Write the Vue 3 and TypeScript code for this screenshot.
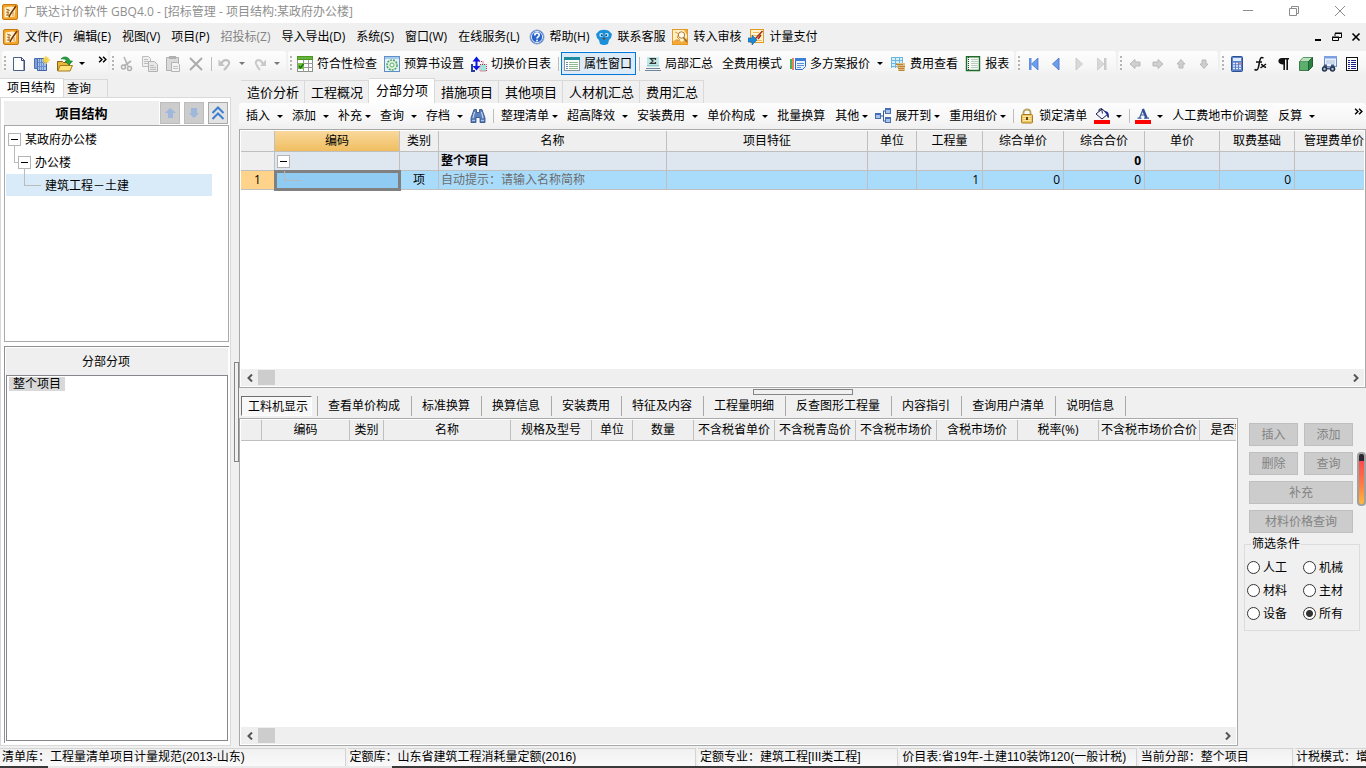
<script setup lang="ts">
import { ref } from 'vue'

type Arrow = 'none' | 'near' | 'far'
interface Tool {
  id: string
  icon?: string
  text?: string
  arrow?: Arrow
  sep?: boolean
  boxed?: boolean
  off?: boolean
}
interface MenuItem { text: string; icon?: string; off?: boolean }
interface Column { label: string; width: number }

const page = 'fill="#fff" stroke="#4a5f86"'
const grey = '#b4b4b4'

const icons: Record<string, string> = {
  app: '<rect x=".5" y=".5" width="15" height="15" rx="1.5" fill="#f2a52a" stroke="#c47a10"/><path d="M2.500 3.500l7-1 4 1-1 9-10 1z" fill="#fff3cf"/><path d="M4 5l4 1.500M4 8l3 1M4 11h3M6 5v7" stroke="#b0712a"/><path d="M14 2L8.500 10l-1.500 3" stroke="#7a3208" stroke-width="1.500" fill="none"/><path d="M11 8v4" stroke="#c88a3a"/>',
  help: '<circle cx="8" cy="8" r="7" fill="#2a62c8" stroke="#8fa6cf"/><circle cx="8" cy="8" r="5.6" fill="none" stroke="#dce9ff"/><path d="M5.8 6.4c0-3 4.6-2.800 4.400-.2-.1 1.500-2.200 1.600-2.200 3.300" fill="none" stroke="#fff" stroke-width="1.700"/><rect x="7.200" y="10.700" width="1.700" height="1.700" fill="#fff"/>',
  service: '<path d="M2 3C4 0 12 0 14 3l2 2-1 4-2 2-1 4-3 1H7l-3-1-1-4-2-2-1-4z" fill="#1c8fdb"/><circle cx="5.300" cy="6" r="2" fill="#bdeaff"/><circle cx="10.700" cy="6" r="2" fill="#bdeaff"/><circle cx="5.800" cy="6.300" r="1" fill="#0b3d78"/><circle cx="10.200" cy="6.300" r="1" fill="#0b3d78"/><path d="M6.500 9.500L8 8.500l1.500 1L8 11z" fill="#7a3a1a"/>',
  audit: '<rect x=".5" y=".5" width="15" height="15" fill="#fdf0c4" stroke="#e39a25"/><path d="M1 12l4-2 5 3 5-4v6H1zM12 1h3v5z" fill="#f4a93a"/><path d="M3 3l4 2-2 3 3 3-4 1" fill="none" stroke="#d99a45"/><circle cx="9.500" cy="6" r="3.200" fill="#fffaf0" stroke="#b07a2d"/><path d="M11.500 8.500L15 13" stroke="#a0703a" stroke-width="1.800"/>',
  pay: '<rect x="2.500" y=".5" width="13" height="13" fill="#fff4d0" stroke="#e39a25"/><path d="M5 3.500h6M5 6.500h5M8 11.500h6" stroke="#efb95d"/><path d="M14.500 2L9 8l-2 2M13 6l-3 4" stroke="#a02c16" stroke-width="1.500" fill="none"/><path d="M0 9h4V6l5 5-5 5v-3H0z" fill="#1c8ad8" stroke="#125c9c" stroke-width=".6"/>',
  fresh: `<path d="M2.500 1.500h8l3 3v10h-11z" ${page}/><path d="M10.500 1.500v3h3M13 14V5" fill="none" stroke="#2e4674"/>`,
  batch: '<path d="M3.500 2.500h9v12h-9z" fill="#a9c3ea" stroke="#3c62a8"/><path d="M5.500 3v11M7.500 3v11M9.500 3v11M4 6.500h8M4 10.500h8" stroke="#6b8fcd"/><path d="M.5 2.500h3v10h-3z" fill="#7d9fd6" stroke="#4a70b4"/><path d="M12 0v8M8.500 4H16M9.500 1.500l5 5M14.500 1.500l-5 5" stroke="#f2d24a" stroke-width="1.400"/>',
  open: '<path d="M.5 5.500h5l1 1h6v8H.5z" fill="#e9b53a" stroke="#8b6310"/><path d="M3 9.500h12.500L13 15H.8z" fill="#ffe27a" stroke="#a37a1c"/><path d="M4 3c2-3 8-3 9 2h2.500L12 9 8 5h2C9 3 6 2.500 4 3z" fill="#1ca33a" stroke="#0d6b24" stroke-width=".6"/>',
  cut: `<path d="M5 1l4 9M12 5L5 10" stroke="${grey}" stroke-width="1.600"/><circle cx="4.500" cy="11" r="2" fill="none" stroke="#b0b0b0" stroke-width="1.500"/><circle cx="10.500" cy="12.500" r="2" fill="none" stroke="#b0b0b0" stroke-width="1.500"/>`,
  copy: '<path d="M.5 .5h6l2 2v8h-8z" fill="#f0f0f0" stroke="#bdbdbd"/><path d="M6.500 5.500h6l3 3v7h-9z" fill="#e8e8e8" stroke="#b2b2b2"/><path d="M8 9.500h4M8 11.500h6M8 13.500h6M2 3.500h4M2 5.500h4M2 7.500h4" stroke="#bdbdbd"/>',
  paste: '<path d="M1.500 1.500h12v13h-12z" fill="#dadada" stroke="#b0b0b0"/><path d="M4 0h7v3H4z" fill="#b0b0b0"/><path d="M6.500 6.500h6l2 2v7h-8z" fill="#f3f3f3" stroke="#b4b4b4"/><path d="M8 10.500h5M8 12.500h5" stroke="#c2c2c2"/>',
  del: '<path d="M2 2l12 12M14 2L2 14" stroke="#ababab" stroke-width="2"/>',
  undo: '<path d="M4 8c3-6 9-4 8-.5-1 3-3 4-5 6.500" fill="none" stroke="#c0c0c0" stroke-width="2.200"/><path d="M1.500 3.500V10H8z" fill="#c4c4c4"/>',
  redo: '<path d="M11 8C8 2 3 4 4 7.500c1 3 2 4 4 6.500" fill="none" stroke="#cacaca" stroke-width="2.200"/><path d="M14 3.500V10H8z" fill="#cacaca"/>',
  check: '<rect x=".5" y=".5" width="15" height="15" fill="#fff" stroke="#8a938a"/><rect x="0" y="0" width="16" height="4" fill="#4a9a1f"/><path d="M1 2h14" stroke="#8acb62"/><path d="M0 7.500h16M0 11.500h16M6.500 4v12M11.500 4v12" stroke="#9a9a9a"/><rect x="1" y="7" width="6" height="6" fill="#72c043"/><path d="M2 10l1.500 2L6.500 8" stroke="#176a0d" stroke-width="1.300" fill="none"/>',
  budget: '<rect x=".5" y=".5" width="15" height="15" fill="#e5f0fb" stroke="#5f8fc6"/><rect x="1" y="1" width="14" height="2" fill="#a7caec"/><circle cx="8" cy="9" r="5" fill="#dff2df" stroke="#4fa562" stroke-dasharray="2 1" stroke-width="1.600"/><circle cx="8" cy="9" r="2" fill="#fff" stroke="#58ad64"/>',
  swap: '<path d="M5.500 4v8" stroke="#0a18e0" stroke-width="2"/><path d="M1.500 5.500l4-5 4 5zM1.500 10l4 4.500 4-4.500z" fill="#0a18e0"/><path d="M10 8h5v7h-5z" fill="#98e9e0"/><path d="M8 5.500h4V8M9 8.500h6.500V15H9z" fill="none" stroke="#d02444" stroke-dasharray="1 1"/><path d="M0 8h2v6h2v2H0z" fill="#2b3aa0"/>',
  prop: '<rect x=".5" y="1.500" width="15" height="13" fill="#fff" stroke="#89949f"/><rect x="0" y="1" width="16" height="3" fill="#1c8c9e"/><path d="M2 6.500h2M2 8.500h2M2 10.500h2M2 12.500h2" stroke="#6c87c0"/><path d="M5 6.500h9M5 8.500h9M5 10.500h9M5 12.500h9" stroke="#8fb98a"/>',
  local: '<path d="M2 1h12v10H2z" fill="#bfe7e4"/><path d="M10.500 4V2.700h-5L8 5 5.500 7.300h5V6" fill="none" stroke="#333" stroke-width="1.200"/><path d="M2 9.500h12" stroke="#8fcac7"/><path d="M1 12.500h14M0 14.500h16" stroke="#70859a"/>',
  plans: '<path d="M1 3v10" stroke="#1aa232" stroke-width="1.600"/><path d="M3 2v12" stroke="#e65a2d" stroke-width="1.500"/><path d="M5.500 2.500h10v8l-3 3h-7z" fill="#e9f4ff" stroke="#2b6bc0"/><path d="M5 2h11v3H5z" fill="#3c7fd4"/><path d="M7 7.500h7M7 9.500h7M7 11.500h4" stroke="#5a8fd2"/>',
  fee: '<rect x="1" y="1" width="12" height="11" fill="#d6effa"/><path d="M1 1.500h12M1 4.500h12M1 7.500h12M1 10.500h12M1.500 1v11M5.500 1v11M9.500 1v11M12.500 1v6" stroke="#6fb6dc"/><path d="M7 7h8v8H8v-3H7z" fill="#e2be80"/><path d="M6 8.500h7M8 10.500h7M8 12.500h6M9 14.500h5" stroke="#b8823a"/>',
  report: '<path d="M1.500.700h13v13.800h-13z" fill="#f4faf4" stroke="#1e6b2a" stroke-width="1.400"/><path d="M3.500 1v13" stroke="#333" stroke-dasharray="1 1"/><path d="M6 3.500h7M6 5.500h7M6 7.500h7M6 9.500h7M6 11.500h7" stroke="#bccbbf"/>',
  first: '<path d="M4 2h2.500v12H4z" fill="#5f93e6"/><path d="M13 2v12L6.500 8z" fill="#6d9df0" stroke="#3a6cc0" stroke-width=".7"/>',
  prev: '<path d="M11 2v12L4.500 8z" fill="#6d9df0" stroke="#3a6cc0" stroke-width=".8"/>',
  next: '<path d="M5 2v12l6.500-6z" fill="#d9d9d9" stroke="#c4c4c4" stroke-width=".8"/>',
  last: '<path d="M3.500 2v12l6.500-6z" fill="#d9d9d9" stroke="#c4c4c4" stroke-width=".7"/><path d="M10 2h2.500v12H10z" fill="#cacaca"/>',
  left: '<path d="M3 8l5-4.500V6h5v4H8v2.500z" fill="#d0d0d0" stroke="#b8b8b8"/>',
  right: '<path d="M13 8L8 3.500V6H3v4h5v2.500z" fill="#d0d0d0" stroke="#b8b8b8"/>',
  up: '<path d="M8 3.500L4 8h2v4h4V8h2z" fill="#cecece" stroke="#b8b8b8"/>',
  down: '<path d="M8 12.500L4 8h2V4h4v4h2z" fill="#cecece" stroke="#b8b8b8"/>',
  calc: '<rect x="2.500" y=".5" width="11" height="15" rx="1" fill="#5b82c9" stroke="#2f4f94"/><rect x="4" y="2" width="8" height="3" fill="#dcebff"/><path d="M4 7.500h8M4 10h8M4 12.500h8" stroke="#e8f0ff" stroke-width="1.500" stroke-dasharray="2 1"/><path d="M10 7.500h2" stroke="#f08060" stroke-width="1.500"/>',
  fx: '<path d="M11.500 2C8.500 .5 8 3 7.500 6L6.500 11c-.5 3-2 3.500-4 2.500M4 6h6M9 8.500c2-.5 2 3.500 5 2.500M14 8l-5.500 4" fill="none" stroke="#111" stroke-width="1.500"/>',
  para: '<path d="M7 2h7v1.400h-1V14h-1.600V3.400H10V14H8.400V8.500C2 8.500 2 2 7 2z" fill="#111"/>',
  cube: '<path d="M1.500 5.500h9v9h-9z" fill="#5cae6c" stroke="#3c7a4a"/><path d="M1.500 5.500L5 1.500h9.500l-4 4z" fill="#b9e3bc" stroke="#5d9667"/><path d="M10.500 5.500l4-4v9l-4 4z" fill="#2b8043" stroke="#1f5f31"/>',
  find: '<rect x="3.500" y=".5" width="12" height="10" fill="#eaf2ff" stroke="#6b8fce"/><path d="M3 0h13v2.500H3z" fill="#7ca0e0"/><path d="M5 5h9M5 7h9" stroke="#a9bede"/><path d="M3 8.500h3v3h4v-3h3l1.500 5H1.500z" fill="#46597a"/><circle cx="3.500" cy="13" r="2.700" fill="#26354c"/><circle cx="11.500" cy="13" r="2.700" fill="#26354c"/><circle cx="3.500" cy="13" r="1.200" fill="#b0c4de"/><circle cx="11.500" cy="13" r="1.200" fill="#b0c4de"/>',
  list: '<rect x="2.500" y="1.500" width="11" height="13" fill="#fff" stroke="#111"/><path d="M4 4.500h2M4 6.500h2M4 8.500h2M4 10.500h2M4 12.500h2M7 4.500h5M7 6.500h5M7 8.500h5M7 10.500h5M7 12.500h5" stroke="#1a1a8c"/>',
  bino: '<path d="M4 1.500h2.500v3h3v-3H12l3 8.500v4.500h-5V9.500H6v5H1V10z" fill="#5b80bb" stroke="#2b4a80" stroke-width=".8"/><path d="M4.500 4L3 10M11.500 4l1.500 6" stroke="#d5e3f8"/><path d="M2 12.500h3M11 12.500h3" stroke="#a9c2e8"/>',
  tree: '<path d="M6 8h2.500M8.500 3v10M8 3h3M8 13h3" stroke="#3b5e9b" fill="none"/><rect x=".5" y="5.500" width="5" height="5" fill="#a8c3ee" stroke="#4a6dab"/><rect x="10.500" y=".5" width="5" height="5" fill="#a8c3ee" stroke="#4a6dab"/><rect x="10.500" y="9.500" width="5" height="5" fill="#a8c3ee" stroke="#4a6dab"/><path d="M1 6.500h4M11 1.500h4M11 10.500h4" stroke="#3f6fc4"/>',
  lock: '<path d="M4.500 7V4.500c0-4 7-4 7 0V7" fill="none" stroke="#b9a565" stroke-width="1.800"/><rect x="2.500" y="6.500" width="11" height="8.500" rx="1" fill="#efc560" stroke="#a87c20"/><path d="M4 8.500h8M4 10.500h8M4 12.500h8" stroke="#fbe7a8"/><path d="M8 9v3" stroke="#5e4510" stroke-width="2"/>',
  bucket: '<path d="M2 6l6-5 6 5-6 5z" fill="#f4f6ff" stroke="#1b1b50"/><path d="M5 3.500V1.500L7.500 .5l1 5" fill="none" stroke="#1b1b50"/><path d="M10 3c4 0 5 2 5 6-1 2-2 0-2-2z" fill="#1b2c8c"/><rect x="0" y="12" width="16" height="4" fill="#f00"/>',
  color: '<path d="M2.500 10.200h4M9 10.200h5M4.500 10L8 1.500" stroke="#3e5f9f" stroke-width="1.300" fill="none"/><path d="M7.800 1l3.700 9" stroke="#2f4f96" stroke-width="2.500"/><path d="M6 7h4" stroke="#3e5f9f"/><rect x="0" y="12" width="16" height="4" fill="#f00"/>',
  blueUp: '<path d="M8 3L3 8h3v5h5V8h3z" fill="#9fb6dd"/>',
  blueDown: '<path d="M8 13l5-5h-2V3H5v5H3z" fill="#9fb6dd"/>',
  chevrons: '<path d="M2.500 8L8 2.500 13.500 8M2.500 14L8 8.500l5.500 5.500" fill="none" stroke="#3a7fd0" stroke-width="2"/>',
}

const menus: MenuItem[] = [
  { text: '文件(F)' }, { text: '编辑(E)' }, { text: '视图(V)' }, { text: '项目(P)' },
  { text: '招投标(Z)', off: true }, { text: '导入导出(D)' }, { text: '系统(S)' },
  { text: '窗口(W)' }, { text: '在线服务(L)' }, { text: '帮助(H)', icon: 'help' },
  { text: '联系客服', icon: 'service' }, { text: '转入审核', icon: 'audit' }, { text: '计量支付', icon: 'pay' },
]

const bars: { id: string; tools: Tool[]; more?: boolean }[] = [
  { id: 'file', more: true, tools: [{ id: 'fresh', icon: 'fresh' }, { id: 'batch', icon: 'batch' }, { id: 'open', icon: 'open', arrow: 'near' }] },
  { id: 'edit', tools: [
    { id: 'cut', icon: 'cut' }, { id: 'copy', icon: 'copy' }, { id: 'paste', icon: 'paste' }, { id: 'del', icon: 'del' },
    { id: 's1', sep: true }, { id: 'undo', icon: 'undo', arrow: 'near', off: true }, { id: 'redo', icon: 'redo', arrow: 'near', off: true }] },
  { id: 'common', tools: [
    { id: 'check', icon: 'check', text: '符合性检查' }, { id: 'budget', icon: 'budget', text: '预算书设置' },
    { id: 'swap', icon: 'swap', text: '切换价目表' }, { id: 's2', sep: true },
    { id: 'prop', icon: 'prop', text: '属性窗口', boxed: true }, { id: 's3', sep: true },
    { id: 'local', icon: 'local', text: '局部汇总' }, { id: 'mode', text: '全费用模式' },
    { id: 'plans', icon: 'plans', text: '多方案报价', arrow: 'far' },
    { id: 'fee', icon: 'fee', text: '费用查看' }, { id: 'report', icon: 'report', text: '报表' }] },
  { id: 'nav', tools: ['first', 'prev', 'next', 'last'].map((i) => ({ id: i, icon: i })) },
  { id: 'move', tools: ['left', 'right', 'up', 'down'].map((i) => ({ id: i, icon: i })) },
  { id: 'misc', tools: ['calc', 'fx', 'para', 'cube', 'find', 'list'].map((i) => ({ id: i, icon: i })) },
]

const actions: Tool[] = [
  { id: 'ins', text: '插入', arrow: 'far' }, { id: 'add', text: '添加', arrow: 'far' },
  { id: 'fill', text: '补充', arrow: 'near' }, { id: 'query', text: '查询', arrow: 'far' },
  { id: 'save', text: '存档', arrow: 'far' }, { id: 'bino', icon: 'bino' }, { id: 'a1', sep: true },
  { id: 'tidy', text: '整理清单', arrow: 'near' }, { id: 'high', text: '超高降效', arrow: 'far' },
  { id: 'inst', text: '安装费用', arrow: 'far' }, { id: 'unit', text: '单价构成', arrow: 'far' },
  { id: 'conv', text: '批量换算' }, { id: 'other', text: '其他', arrow: 'near' },
  { id: 'expand', icon: 'tree', text: '展开到', arrow: 'near' }, { id: 'reuse', text: '重用组价', arrow: 'near' },
  { id: 'a2', sep: true }, { id: 'lock', icon: 'lock', text: '锁定清单' }, { id: 'bucket', icon: 'bucket', arrow: 'near' },
  { id: 'a3', sep: true }, { id: 'color', icon: 'color', arrow: 'near' },
  { id: 'labor', text: '人工费地市价调整' }, { id: 'back', text: '反算', arrow: 'far' },
]

const mainTabs = ['造价分析', '工程概况', '分部分项', '措施项目', '其他项目', '人材机汇总', '费用汇总']
const activeTab = ref('分部分项')
const detailTabs = ['工料机显示', '查看单价构成', '标准换算', '换算信息', '安装费用', '特征及内容', '工程量明细', '反查图形工程量', '内容指引', '查询用户清单', '说明信息']
const activeDetail = ref('工料机显示')

const cols: Column[] = [
  { label: '', width: 34 }, { label: '编码', width: 125 }, { label: '类别', width: 39 }, { label: '名称', width: 228 },
  { label: '项目特征', width: 201 }, { label: '单位', width: 49 }, { label: '工程量', width: 66 }, { label: '综合单价', width: 81 },
  { label: '综合合价', width: 81 }, { label: '单价', width: 75 }, { label: '取费基础', width: 75 }, { label: '管理费单价', width: 79 },
]
const detailCols: Column[] = [
  { label: '', width: 21 }, { label: '编码', width: 88 }, { label: '类别', width: 34 }, { label: '名称', width: 127 },
  { label: '规格及型号', width: 81 }, { label: '单位', width: 41 }, { label: '数量', width: 61 }, { label: '不含税省单价', width: 81 },
  { label: '不含税青岛价', width: 81 }, { label: '不含税市场价', width: 81 }, { label: '含税市场价', width: 81 },
  { label: '税率(%)', width: 81 }, { label: '不含税市场价合价', width: 101 }, { label: '是否暂估', width: 70 },
]

const filters = ['人工', '机械', '材料', '主材', '设备', '所有']
const filter = ref('所有')

const status = [
  { text: '清单库：工程量清单项目计量规范(2013-山东)', grow: 342 },
  { text: '定额库：山东省建筑工程消耗量定额(2016)', grow: 345 },
  { text: '定额专业：建筑工程[III类工程]', grow: 197 },
  { text: '价目表:省19年-土建110装饰120(一般计税)', grow: 233 },
  { text: '当前分部：整个项目', grow: 151 },
  { text: '计税模式：增', grow: 70 },
]
</script>

<template>
  <div class="window">
    <header class="title">
      <svg class="ic" viewBox="0 0 16 16" v-html="icons.app"></svg>
      <h1>广联达计价软件 GBQ4.0 - [招标管理 - 项目结构:某政府办公楼]</h1>
      <div class="winbtns">
        <button type="button" aria-label="最小化"><svg viewBox="0 0 12 12"><path d="M1 5.500h10" /></svg></button>
        <button type="button" aria-label="还原"><svg viewBox="0 0 12 12"><path d="M1.500 3.500h7v7h-7zM3.500 3V1.500h7v7H9" /></svg></button>
        <button type="button" aria-label="关闭"><svg viewBox="0 0 12 12"><path d="M1 1l10 10M11 1L1 11" /></svg></button>
      </div>
    </header>

    <nav class="menu">
      <svg class="ic" viewBox="0 0 16 16" v-html="icons.app"></svg>
      <button v-for="m in menus" :key="m.text" type="button" :class="{ off: m.off, pic: m.icon }" :disabled="m.off">
        <svg v-if="m.icon" class="ic" viewBox="0 0 16 16" v-html="icons[m.icon]"></svg>{{ m.text }}
      </button>
      <div class="docbtns">
        <button type="button" aria-label="最小化文档"><svg viewBox="0 0 10 10"><path d="M2 8h6" stroke-width="2" /></svg></button>
        <button type="button" aria-label="还原文档"><svg viewBox="0 0 10 10"><path d="M.5 5.500h6v3h-6zM0 5h7M3 4V1.500h6.500v4H7M3 1h7" /></svg></button>
        <button type="button" aria-label="关闭文档"><svg viewBox="0 0 10 10"><path d="M1.500 1.500l7 7M8.500 1.500l-7 7" stroke-width="1.600" /></svg></button>
      </div>
    </nav>

    <div class="bars">
      <div v-for="b in bars" :key="b.id" class="bar" :class="b.id" role="toolbar">
        <i class="grip"></i>
        <template v-for="t in b.tools" :key="t.id">
          <i v-if="t.sep" class="sep"></i>
          <button v-else type="button" class="tool" :class="[t.arrow, { pic: t.icon, only: !t.text, boxed: t.boxed, off: t.off }]" :aria-label="t.text || t.id">
            <svg v-if="t.icon" class="ic" viewBox="0 0 16 16" v-html="icons[t.icon]"></svg>
            <span v-if="t.text">{{ t.text }}</span>
            <i v-if="t.arrow" class="arrow"></i>
          </button>
        </template>
        <button v-if="b.more" type="button" class="more" aria-label="更多">
          <svg viewBox="0 0 8 6"><path d="M1 .5L3.500 3 1 5.500M4.500 .5L7 3 4.500 5.500" /></svg>
        </button>
      </div>
    </div>

    <div class="body">
      <aside class="left">
        <div class="sidetabs" role="tablist">
          <button type="button" role="tab" class="on">项目结构</button>
          <button type="button" role="tab">查询</button>
        </div>
        <div class="sidebox">
          <div class="sidehead">
            <h2>项目结构</h2>
            <button type="button" disabled aria-label="上移"><svg class="ic" viewBox="0 0 16 16" v-html="icons.blueUp"></svg></button>
            <button type="button" disabled aria-label="下移"><svg class="ic" viewBox="0 0 16 16" v-html="icons.blueDown"></svg></button>
            <button type="button" class="live" aria-label="收起"><svg class="ic" viewBox="0 0 16 16" v-html="icons.chevrons"></svg></button>
          </div>
          <ul class="tree" role="tree">
            <li role="treeitem"><i class="box"></i>某政府办公楼</li>
            <li role="treeitem" class="l2"><i class="elbow"></i><i class="box"></i>办公楼</li>
            <li role="treeitem" class="l3"><i class="elbow wide"></i>建筑工程－土建</li>
          </ul>
          <section class="parts">
            <h3>分部分项</h3>
            <div class="partlist"><span>整个项目</span></div>
          </section>
        </div>
      </aside>

      <div class="vsplit"><i></i></div>

      <main class="work">
        <div class="maintabs" role="tablist">
          <button v-for="t in mainTabs" :key="t" type="button" role="tab" :class="{ on: t === activeTab }" @click="activeTab = t">{{ t }}</button>
        </div>
        <div class="bar actions" role="toolbar">
          <template v-for="t in actions" :key="t.id">
            <i v-if="t.sep" class="sep"></i>
            <button v-else type="button" class="tool" :class="[t.arrow, { pic: t.icon, only: !t.text }]" :aria-label="t.text || t.id">
              <svg v-if="t.icon" class="ic" viewBox="0 0 16 16" v-html="icons[t.icon]"></svg>
              <span v-if="t.text">{{ t.text }}</span>
              <i v-if="t.arrow" class="arrow"></i>
            </button>
          </template>
          <button type="button" class="more" aria-label="更多">
            <svg viewBox="0 0 8 6"><path d="M1 .5L3.500 3 1 5.500M4.500 .5L7 3 4.500 5.500" /></svg>
          </button>
        </div>

        <section class="grid upper">
          <div class="view">
            <table>
              <colgroup><col v-for="(c, i) in cols" :key="i" :style="{ width: c.width + 'px' }" /></colgroup>
              <thead><tr><th v-for="(c, i) in cols" :key="i" :class="{ hot: i === 1 }">{{ c.label }}</th></tr></thead>
              <tbody>
                <tr class="sum">
                  <td class="rowno"></td><td class="code"><i class="box"></i></td><td></td><td>整个项目</td><td></td><td></td><td></td><td></td>
                  <td class="num">0</td><td></td><td></td><td></td>
                </tr>
                <tr class="cur">
                  <td class="rowno">1</td><td class="pick"><i class="elbow"></i></td><td class="mid">项</td><td class="hint">自动提示：请输入名称简称</td><td></td><td></td>
                  <td class="num">1</td><td class="num">0</td><td class="num">0</td><td></td><td class="num">0</td><td></td>
                </tr>
              </tbody>
            </table>
          </div>
          <div class="scroll">
            <button type="button" aria-label="向左"><svg viewBox="0 0 8 8"><path d="M6 .5L2.500 4 6 7.500" /></svg></button>
            <i></i>
            <button type="button" class="end" aria-label="向右"><svg viewBox="0 0 8 8"><path d="M2 .5L5.500 4 2 7.500" /></svg></button>
          </div>
        </section>

        <div class="hsplit"><i></i></div>

        <section class="lower">
          <div class="detail">
            <div class="detailtabs" role="tablist">
              <button v-for="t in detailTabs" :key="t" type="button" role="tab" :class="{ on: t === activeDetail }" @click="activeDetail = t">{{ t }}</button>
            </div>
            <div class="grid">
              <div class="view">
                <table>
                  <colgroup><col v-for="(c, i) in detailCols" :key="i" :style="{ width: c.width + 'px' }" /></colgroup>
                  <thead><tr><th v-for="(c, i) in detailCols" :key="i">{{ c.label }}</th></tr></thead>
                </table>
              </div>
              <div class="scroll">
                <button type="button" aria-label="向左"><svg viewBox="0 0 8 8"><path d="M6 .5L2.500 4 6 7.500" /></svg></button>
                <i></i>
                <button type="button" class="end" aria-label="向右"><svg viewBox="0 0 8 8"><path d="M2 .5L5.500 4 2 7.500" /></svg></button>
              </div>
            </div>
          </div>
          <aside class="ops">
            <div class="opgrid">
              <button type="button" disabled>插入</button><button type="button" disabled>添加</button>
              <button type="button" disabled>删除</button><button type="button" disabled>查询</button>
              <button type="button" disabled class="full">补充</button>
              <button type="button" disabled class="full">材料价格查询</button>
            </div>
            <fieldset>
              <legend>筛选条件</legend>
              <label v-for="f in filters" :key="f"><input v-model="filter" type="radio" name="filter" :value="f" />{{ f }}</label>
            </fieldset>
            <i class="meter"></i>
          </aside>
        </section>
      </main>
    </div>

    <footer class="status">
      <span v-for="s in status" :key="s.text" :style="{ flexGrow: s.grow }">{{ s.text }}</span>
    </footer>
    <div class="edge"></div>
  </div>
</template>

<style>
body { margin: 0; background: #f0f0f0; }
</style>

<style scoped>
.window { height: 100vh; display: flex; flex-direction: column; overflow: hidden; background: #f0f0f0; color: #000; font: 12px/16px "Open Sans", "Noto Sans CJK SC", sans-serif; }
.window *, .window *::before, .window *::after { box-sizing: border-box; }
button { font: inherit; color: inherit; background: none; border: 0; border-radius: 0; padding: 0; margin: 0; display: flex; align-items: center; white-space: nowrap; flex: none; }
h1, h2, h3, ul { margin: 0; padding: 0; font-size: 12px; font-weight: 400; }
i { display: block; flex: none; }
.ic { width: 16px; height: 16px; flex: none; display: block; }

.title { height: 23px; background: #fff; display: flex; align-items: center; padding-left: 2px; gap: 6px; color: #8f8f8f; flex: none; }
.winbtns { margin-left: auto; display: flex; padding-right: 3px; }
.winbtns button { width: 46px; height: 20px; justify-content: center; align-items: flex-start; padding-top: 3px; }
.winbtns svg { width: 12px; height: 12px; fill: none; stroke: #8c8c8c; }

.menu { height: 28px; display: flex; align-items: center; padding: 0 3px 0 3px; flex: none; }
.menu > button { padding: 0 5px 0 6px; height: 22px; gap: 4px; }
.menu > .pic { padding: 0 3px 0 4px; gap: 5px; }
.menu > .off { color: #838383; }
.docbtns { margin-left: auto; display: flex; gap: 4px; }
.docbtns button { width: 15px; height: 16px; justify-content: center; }
.docbtns svg { width: 10px; height: 10px; fill: none; stroke: #000; }

.bars { display: flex; gap: 2px; height: 27px; padding-left: 2px; flex: none; }
.bar { display: flex; align-items: center; background: linear-gradient(#fdfdfd, #f7f7f7 60%, #efefef); border-radius: 3px; height: 25px; padding-left: 2px; padding-right: 4px; flex: none; }
.file { width: 106px; padding-right: 1px; }
.edit { width: 176px; }
.common { width: 726px; }
.nav, .move { width: 100px; }
.misc { flex: 1; }
.grip { width: 2px; height: 15px; margin-right: 2px; background: repeating-linear-gradient(#b4b4b4 0 2px, transparent 2px 4px); }
.sep { width: 1px; height: 14px; background: #bdbdbd; margin: 0 2px 0 3px; }
.tool { height: 23px; padding: 0 5px; }
.tool.pic { padding: 0 4px 0 3px; }
.tool.pic span { margin-left: 4px; }
.tool.near, .tool.far { padding-right: 4px; }
.arrow { border: 3px solid transparent; border-top-color: #000; border-bottom: 0; width: 6px; height: 3px; }
.near .arrow { margin-left: 3px; }
.far .arrow { margin-left: 7px; }
.only.near .arrow { margin-left: 6px; }
.off .arrow { border-top-color: #777; }
.tool.boxed { padding: 0 3px 0 2px; border: 1px solid #0078d7; background: #dcebf7; }
.more { align-self: flex-start; margin: 5px 0 0 auto; }
.more svg { width: 9px; height: 7px; fill: none; stroke: #000; stroke-width: 1.3; display: block; }
.actions { height: 26px; padding-left: 2px; padding-right: 3px; }
.actions .sep { margin: 0 2px 0 3px; }

.body { flex: 1; min-height: 0; display: flex; }
.left { width: 231px; flex: none; display: flex; flex-direction: column; }
.sidetabs { display: flex; height: 19px; align-items: flex-end; flex: none; }
.sidetabs button { height: 18px; width: 44px; padding-left: 3px; border: 1px solid #d9d9d9; border-left: 0; border-bottom: 0; background: #f0f0f0; line-height: 16px; }
.sidetabs .on { height: 19px; width: 64px; padding-left: 7px; background: #fff; }
.sidebox { flex: 1; min-height: 0; display: flex; flex-direction: column; border: 1px solid #d9d9d9; background: #fff; padding: 3px 1px 2px 3px; }
.sidehead { display: flex; height: 24px; align-items: center; flex: none; margin-right: 1px; }
.sidehead h2 { flex: 1; background: #efefef; height: 24px; line-height: 24px; font-size: 13px; font-weight: 700; text-align: center; }
.sidehead button { width: 20px; height: 22px; margin-left: 4px; border: 1px solid #bcbcbc; background: #ccc; justify-content: center; }
.sidehead h2 + button { margin-left: 1px; }
.sidehead .live { background: #e3e3e3; border-color: #a9a9a9; }
.tree { flex: 13 1 0; min-height: 0; border: 1px solid #a9a9a9; list-style: none; padding: 2px 16px 0 1px; margin-bottom: 4px; }
.tree li { height: 23px; display: flex; align-items: center; padding-left: 2px; position: relative; }
.tree .l2 { padding-left: 12px; }
.tree .l3 { padding-left: 39px; background: linear-gradient(#d9eaf9, #d9eaf9) 0 0 / 100% 22px no-repeat; }
.box { width: 13px; height: 13px; margin-right: 4px; border: 1px solid #b4b4b4; background: linear-gradient(#000, #000) center / 7px 1px no-repeat #fff; }
.elbow { position: absolute; left: 8px; top: -6px; width: 4px; height: 18px; border: solid #bbb; border-width: 0 0 1px 1px; }
.elbow.wide { left: 18px; width: 17px; }
.parts { flex: 24 1 0; min-height: 0; display: flex; flex-direction: column; border: 1px solid #8f9093; border-right: 0; border-bottom: 0; padding: 1px 1px 2px 1px; }
.parts h3 { height: 27px; line-height: 27px; background: #efefef; text-align: center; padding-right: 22px; flex: none; }
.partlist { flex: 1; border: 1px solid #85878c; padding: 1px 2px; display: flex; align-items: flex-start; }
.partlist span { background: #d9d9d9; height: 14px; line-height: 14px; padding: 0 4px; }

.vsplit { width: 8px; flex: none; display: flex; align-items: center; padding-left: 3px; }
.vsplit i { width: 5px; height: 100px; border: 1px solid #858585; background: #f0f0f0; }

.work { flex: 1; min-width: 0; display: flex; flex-direction: column; }
.maintabs { display: flex; height: 25px; align-items: flex-end; padding-left: 2px; flex: none; font-size: 13px; }
.maintabs button { height: 23px; padding: 0 5px 0 6px; border: 1px solid #d9d9d9; border-left: 0; border-bottom: 0; }
.maintabs .on { height: 25px; background: #fff; padding: 0 6px 3px 7px; }

.grid { border: 1px solid #a9a9a9; background: #fff; padding: 1px; display: flex; flex-direction: column; min-height: 0; min-width: 0; flex: 1; }
.upper { flex: 35 1 0; }
.view { flex: 1; min-height: 0; overflow: hidden; }
table { table-layout: fixed; width: 1px; border-collapse: separate; border-spacing: 0; }
th, td { border: solid #bfbfbf; border-width: 0 1px 1px 0; padding: 0; height: 19px; line-height: 18px; font-weight: 400; white-space: nowrap; overflow: hidden; }
th { height: 21px; line-height: 20px; background: #efefef; text-align: center; }
.hot { background: linear-gradient(#f9d89c, #f0be60); }
.sum td { background: #dee6f0; font-weight: 700; }
.cur td { background: #a9dcfb; }
td { padding: 0 2px; }
.sum .rowno { background: #efefef; }
.cur .rowno { background: #ffd48a; text-align: center; }
.mid { text-align: center; }
.num { text-align: right; padding-right: 3px; }
.cur .hint { color: #6d6d6d; }
.cur .pick { background: #8fcbf3; outline: 3px solid #808080; outline-offset: -2px; position: relative; overflow: visible; }
.pick .elbow { left: 9px; top: 0; width: 17px; height: 10px; border-color: #b8b8b8; }
.scroll { height: 17px; background: #efefef; display: flex; align-items: center; flex: none; }
.scroll i { width: 17px; height: 15px; background: #cdcdcd; }
.scroll button { width: 17px; height: 17px; justify-content: center; }
.scroll .end { margin-left: auto; }
.scroll svg { width: 8px; height: 8px; fill: none; stroke: #555; stroke-width: 2; }

.hsplit { height: 8px; display: flex; justify-content: center; align-items: center; flex: none; }
.hsplit i { width: 100px; height: 6px; border: 1px solid #858585; background: #f0f0f0; }

.lower { flex: 48 1 0; min-height: 0; display: flex; }
.detail { flex: 1; min-width: 0; display: flex; flex-direction: column; }
.detailtabs { display: flex; height: 22px; flex: none; padding-left: 2px; }
.detailtabs button { height: 20px; padding: 0 11px 0 10px; border-right: 1px solid #a9a9a9; }
.detailtabs .on { height: 20px; width: 71px; padding: 2px 0 0 6px; border: 1px solid #fff; border-top-color: #6e6e6e; border-left-color: #6e6e6e; background: #f8f8f8; margin-right: 5px; }
.detailtabs .on + button { border-left: 1px solid #a9a9a9; }

.ops { width: 128px; flex: none; padding: 27px 6px 0; position: relative; }
.opgrid { display: grid; grid-template-columns: 1fr 1fr; gap: 6px; padding: 0 7px 0 5px; }
.opgrid button { height: 23px; border: 1px solid #bfbfbf; background: #ccc; color: #838383; justify-content: center; }
.opgrid .full { grid-column: span 2; }
fieldset { margin: 3px 0 0; padding: 4px 0 5px 2px; border: 1px solid #dcdcdc; display: grid; grid-template-columns: 56px 56px; min-width: 0; }
legend { padding: 0 1px; margin-left: 4px; }
label { height: 23px; display: flex; align-items: center; gap: 3px; }
input { appearance: none; width: 13px; height: 13px; margin: 0; border: 1px solid #333; border-radius: 50%; background: #fff; flex: none; }
input:checked { background: radial-gradient(circle, #333 0 3px, #fff 4px); }
.meter { position: absolute; right: 0; top: 56px; width: 9px; height: 54px; border: 2px solid #a0a0a0; border-radius: 4px; background: linear-gradient(#2c2833 0 7px, #ff4a50 7px, #ff7a45 60%, #ffb93c); }

.status { height: 18px; margin-top: 2px; display: flex; gap: 2px; flex: none; line-height: 17px; font-family: "Liberation Sans", "Noto Sans CJK SC", sans-serif; }
.status span { flex: 1 1 0; min-width: 0; overflow: hidden; white-space: nowrap; padding-left: 2px; border: solid #d4d4d4; border-width: 1px 1px 0 0; background: linear-gradient(#f0f0f0, #fafafa); }
.status span:last-child { padding-left: 1px; border-right: 0; }
.edge { height: 2px; flex: none; background: linear-gradient(90deg, #3a3a3a 0 48px, #e9e9e9 48px 392px, #3a3a3a 392px); }
</style>
